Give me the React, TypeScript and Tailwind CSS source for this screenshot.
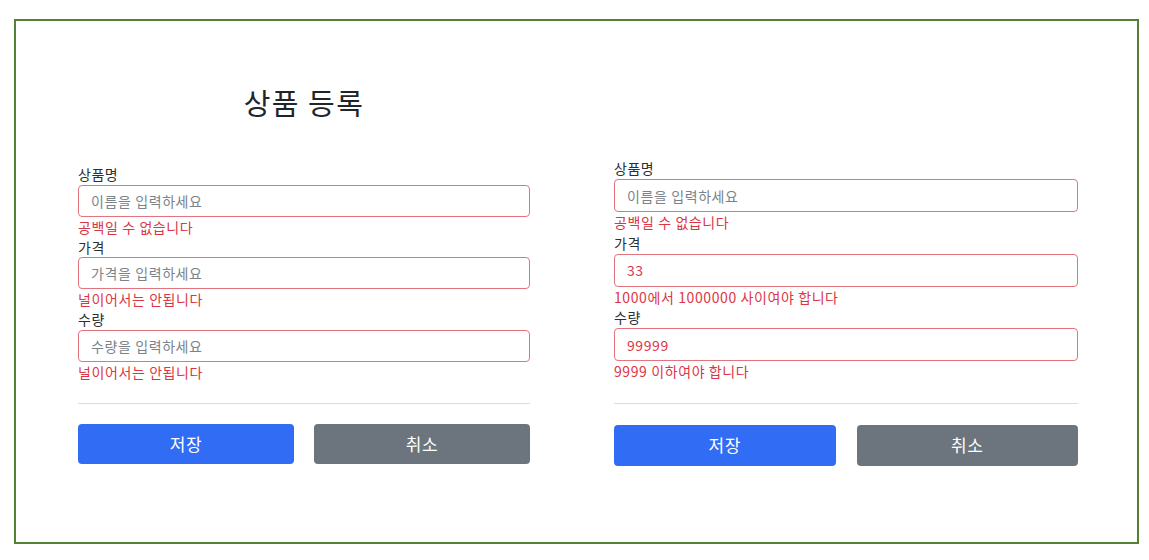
import type { ReactNode } from "react";

const font = { fontFamily: '"Noto Sans CJK KR", "Noto Sans", sans-serif' };

type FieldProps = {
  label: string;
  placeholder: string;
  value?: string;
  error: string;
  tall?: boolean;
};

function Field({ label, placeholder, value, error, tall }: FieldProps) {
  return (
    <div className="flex flex-col">
      <label
        className={
          tall
            ? "h-[21px] text-[14px] font-normal leading-[21px] tracking-[0.5px] text-[#2b2f33]"
            : "h-[20.5px] text-[14px] font-normal leading-[20.5px] tracking-[0.5px] text-[#2b2f33]"
        }
      >
        {label}
      </label>
      <input
        readOnly
        value={value ?? ""}
        placeholder={placeholder}
        className={
          tall
            ? "h-[33px] w-full rounded-[4px] border border-[#e2747e] bg-white px-3 text-[14px] tracking-[0.6px] text-[#dc3545] outline-none placeholder:text-[#7b838a]"
            : "h-[32px] w-full rounded-[4px] border border-[#e2747e] bg-white px-3 text-[14px] tracking-[0.6px] text-[#dc3545] outline-none placeholder:text-[#7b838a]"
        }
        style={font}
      />
      <p
        className={
          tall
            ? "h-[20.5px] text-[14px] leading-[20.5px] tracking-[0.6px] text-[#dc3545]"
            : "h-[20px] text-[14px] leading-[20px] tracking-[0.6px] text-[#dc3545]"
        }
      >
        {error}
      </p>
    </div>
  );
}

function Buttons({ tall }: { tall?: boolean }): ReactNode {
  return (
    <div className={tall ? "mt-[21px] grid grid-cols-2 gap-[21px]" : "mt-[20px] grid grid-cols-2 gap-[20px]"}>
      <button
        type="button"
        className={
          tall
            ? "h-[41px] rounded-[4px] bg-[#316cf4] text-[17px] tracking-[0.5px] text-white"
            : "h-[40px] rounded-[4px] bg-[#316cf4] text-[17px] tracking-[0.5px] text-white"
        }
      >
        저장
      </button>
      <button
        type="button"
        className={
          tall
            ? "h-[41px] rounded-[4px] bg-[#6c757d] text-[17px] tracking-[0.5px] text-white"
            : "h-[40px] rounded-[4px] bg-[#6c757d] text-[17px] tracking-[0.5px] text-white"
        }
      >
        취소
      </button>
    </div>
  );
}

export default function App() {
  return (
    <div className="h-[560px] w-[1149px] bg-white pl-[14px] pt-[19px]" style={font}>
      <div className="flex h-[525px] w-[1125px] border-2 border-[#538135]">
        {/* left: empty form */}
        <section className="ml-[62px] mt-[64px] flex w-[452px] flex-col">
          <h3 className="h-[34px] text-center text-[29px] font-normal leading-[34px] tracking-[1.5px] text-[#212529]">
            상품 등록
          </h3>
          <form className="mt-[45px] flex flex-col">
            <Field label="상품명" placeholder="이름을 입력하세요" error="공백일 수 없습니다" />
            <Field label="가격" placeholder="가격을 입력하세요" error="널이어서는 안됩니다" />
            <Field label="수량" placeholder="수량을 입력하세요" error="널이어서는 안됩니다" />
            <hr className="mt-[21px] border-t border-[#dcdcdc]" />
            <Buttons />
          </form>
        </section>

        {/* right: filled form with errors */}
        <section className="ml-[84px] mt-[137px] flex w-[464px] flex-col">
          <form className="flex flex-col">
            <Field tall label="상품명" placeholder="이름을 입력하세요" error="공백일 수 없습니다" />
            <Field tall label="가격" placeholder="가격을 입력하세요" value="33" error="1000에서 1000000 사이여야 합니다" />
            <Field tall label="수량" placeholder="수량을 입력하세요" value="99999" error="9999 이하여야 합니다" />
            <hr className="mt-[21px] border-t border-[#dcdcdc]" />
            <Buttons tall />
          </form>
        </section>
      </div>
    </div>
  );
}
